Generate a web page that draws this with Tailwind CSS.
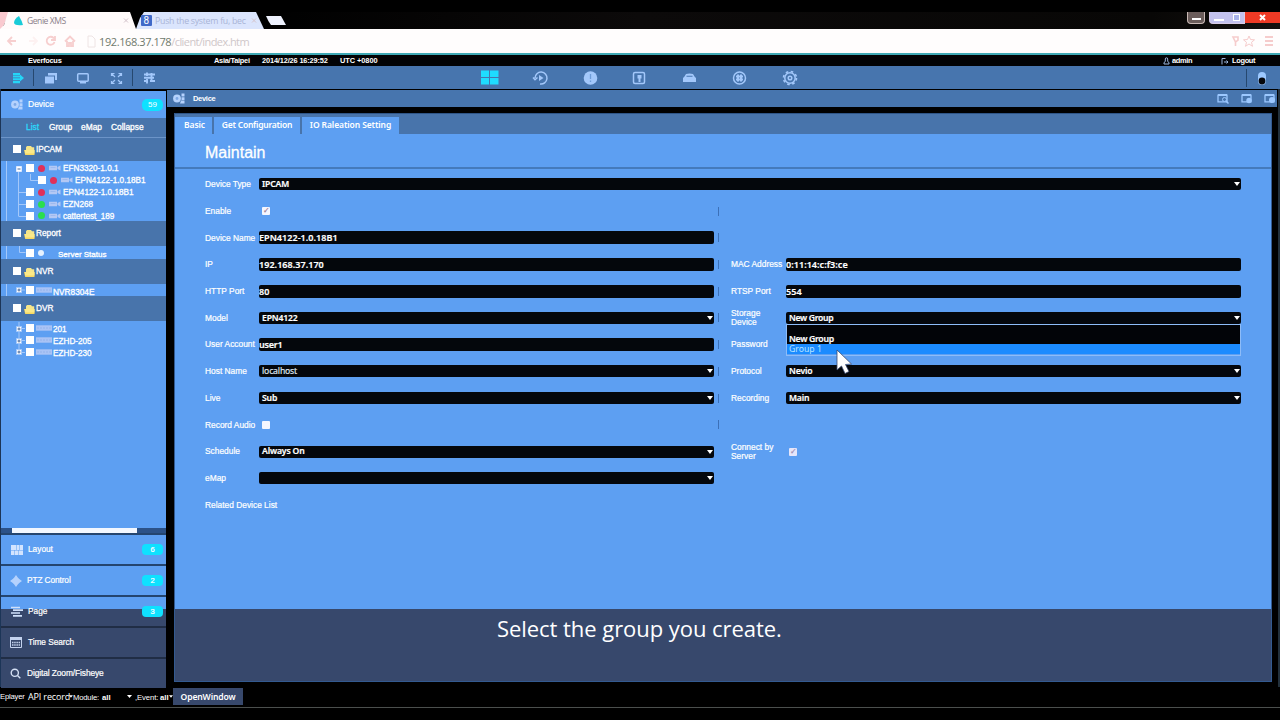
<!DOCTYPE html>
<html lang="en">
<head>
<meta charset="utf-8">
<title>Genie XMS</title>
<script src="https://cdn.jsdelivr.net/npm/@tailwindcss/browser@4"></script>
</head>
<body class="bg-black">
<svg class="hidden">
  <symbol id="cam" viewBox="0 0 12 11"><circle cx="4" cy="5.5" r="3.9"/><circle cx="4" cy="5.5" r="1.4" fill="#7fa9e6"/><path d="M8.5 0.5h3v3h-3zM8.5 4.3h3v2.6h-3zM8 7.6h3.5v3H7z"/></symbol>
  <symbol id="folder" viewBox="0 0 11 9"><path d="M2 1.2 3 0h4l1 1.2h2.2V4H2z" fill="#f5e58a"/><path d="M0 4h8.5l2 0V9H1.2z" fill="#f8d860"/><path d="M1 4h9.5v3.5H1z" fill="#fbe988"/></symbol>
  <symbol id="bullet" viewBox="0 0 12 6"><path d="M0 .8h8v4.4H0zM8.5 2l3-1.5v5l-3-1.5z" fill="#b3c8f4"/><path d="M1.5 2.5h5" stroke="#9db9ee"/></symbol>
  <symbol id="box" viewBox="0 0 16 6"><path d="M0 .3h16v5.4H0z" fill="#a9c3f5"/><path d="M1 3h14" stroke="#93b3ec" stroke-dasharray="2 1"/></symbol>
  <symbol id="win" viewBox="0 0 12 10"><path d="M1 1.2h9v6.6H1z" fill="none" stroke="#9cc8ff" stroke-width="1.3"/><path d="M1 1h9" stroke="#9cc8ff" stroke-width="2"/></symbol>
</svg>
<div class="relative flex h-[720px] w-[1280px] flex-col overflow-hidden bg-black pt-[12px] font-['Liberation_Sans'] text-[9px] leading-none whitespace-nowrap text-white">

  <!-- Browser tabs -->
  <div class="flex h-[17px] shrink-0 items-stretch bg-[linear-gradient(90deg,#000_20%,#0c0a0a_50%,#080706_90%,#14110f)]">
    <svg class="h-[17px] w-[300px]" viewBox="0 0 300 17">
      <path d="M0 0h10L2 17H0z" fill="#f9c9cf"/><path d="M8 0h122l6 17H0L4 13z" fill="#fffafa"/>
      <path d="M144 0h112l8 17H136l4-11z" fill="#dbe5fd"/><path d="M266 4h15l5 9h-15q-3-4-5-9z" fill="#eef1fd"/>
      <path d="M19 4q3 5 4 9-8 1-9-2 0-4 5-7z" fill="#19cbd8"/>
      <rect x="141" y="3" width="11" height="11" rx="1" fill="#4069c8"/>
      <text x="143.500" y="12" font-size="10" font-family="Roboto" fill="#fff">8</text>
      <path d="m124 6.500 4 4m0-4-4 4M252 6.500l4 4m0-4-4 4" stroke="#d4c4cc"/>
      <text x="27" y="12" font-size="8.600" font-family="Open Sans" letter-spacing="-.48" fill="#8b7f89">Genie XMS</text>
      <text x="155" y="12" font-size="8.800" font-family="Open Sans" letter-spacing="-.28" fill="#a9b4d6">Push the system fu, bec</text>
    </svg>
    <div class="ml-auto flex items-start">
      <div class="mr-[4px] flex h-[12px] w-[18px] items-end justify-center rounded-b-[4px] border border-t-0 border-[#c9b9b5] bg-[#6b5d5b] pb-[3px]"><i class="h-[2px] w-[9px] bg-white"></i></div>
      <div class="flex h-[12px] w-[36px] items-center justify-around rounded-bl-[4px] border border-t-0 border-[#d8cbe6] bg-[#c3c2ee]"><i class="mt-[4px] h-[2px] w-[10px] bg-white"></i><i class="size-[7px] border border-white bg-[#a9b3ec]"></i></div>
      <div class="flex h-[11px] w-[35px] items-center justify-center bg-[#ee3a25]"><svg class="size-[7px]" viewBox="0 0 7 7"><path d="m1 1 5 5m0-5-5 5" stroke="#fff" stroke-width="2"/></svg></div>
    </div>
  </div>

  <!-- Address bar -->
  <div class="flex h-[24px] shrink-0 items-center bg-[#fffdfd] pl-[6px]">
    <svg class="h-[16px] w-[91px]" viewBox="0 0 91 16" fill="none" stroke="#f7cfcf" stroke-width="1.8">
      <path d="M10 8H2m4-4L2 8l4 4"/><path d="M23 8h7m-3-4 4 4-4 4" stroke="#fdf1f1"/><path d="M48 5.500A4 4 0 1 0 48.500 9M49 3v4h-4"/><path d="m59 8.500 5-5 5 5M61 8v5h2v-3h2v3h2V8" /><path d="M82 3h4l3 3v8h-7z" stroke="#eee4e4" stroke-width="1"/>
    </svg>
    <span class="font-['Open_Sans'] text-[11px]"><span class="ml-[2px] tracking-[-0.400px] text-[#6f7a6c]">192.168.37.178</span><span class="tracking-[-0.580px] text-[#cfc7c9]">/client/index.htm</span></span>
    <svg class="ml-auto h-[14px] w-[52px]" viewBox="0 0 52 14" fill="none" stroke="#f6cccc"><path d="M5 3h5v3L7.500 8zM7.500 8v4" stroke-width="1.600"/><path d="m21 2 1.500 3.500 4 .3-3 2.500 1 4L21 10l-3.500 2.300 1-4-3-2.500 4-.3z"/><path d="M37 3h8M37 7h8M37 11h8" stroke-width="2"/></svg>
  </div>
  <div class="h-[2px] shrink-0 bg-[#3fa9b5]"></div>

  <!-- Status header -->
  <div class="flex h-[11px] shrink-0 items-center bg-[#020305] text-[7.400px] font-bold">
    <span class="ml-[28px] w-[186px] tracking-[-0.250px]">Everfocus</span>
    <span class="w-[48px] tracking-[-0.25px]">Asia/Taipei</span>
    <span class="w-[78px] tracking-[-0.15px]">2014/12/26 16:29:52</span>
    <span class="tracking-[-0.05px]">UTC +0800</span>
    <svg class="ml-auto h-[8px] w-[7px]" viewBox="0 0 7 8" fill="none" stroke="#9bb6dd"><path d="M1 7V5.500l1.300-1V2a1.200 1.200 0 0 1 2.400 0v2.500L6 5.500V7z"/></svg>
    <span class="ml-[2px] w-[49px] tracking-[-0.3px]">admin</span>
    <svg class="mr-[3px] h-[8px] w-[8px]" viewBox="0 0 8 8" fill="none" stroke="#9bb6dd"><path d="M4.500 1.500H1v6M3 5h4M5.500 3.500 7 5 5.500 6.500"/></svg>
    <span class="w-[48px] tracking-[-0.3px]">Logout</span>
  </div>

  <!-- Toolbar -->
  <div class="flex h-[23px] shrink-0 items-center bg-[#4775ae]">
    <svg class="h-[23px] w-[170px]" viewBox="0 0 170 23" fill="#a3c8fb">
      <path d="M33.500 3v17M132.500 3v17" stroke="#26486f"/>
      <path d="M13 7h7v2h-7zM13 9.600h8v2h-8zM13 12.200h8v2h-8zM13 15h7v2.300h-7zM20 8.500l4 3.500-4 3.500z" fill="#25d5f7"/>
      <path d="M48 7h9v7h-2V9.500h-7zM45 10.500h9v7h-9z"/>
      <rect x="77.700" y="7.700" width="10.500" height="7.500" rx="1" fill="none" stroke="#a3c8fb" stroke-width="1.500"/><path d="M80 16h6v1.500h-6z"/>
      <path d="M111.500 10V7.500h3m4 0h3V10m0 5v2.500h-3m-4 0h-3V15m.5-7 3 3m6-3-3 3m3 6-3-3m-6 3 3-3" fill="none" stroke="#a3c8fb" stroke-width="1.200"/>
      <path d="M144 8.500h11M144 11.800h10M144 15h4M150 15h5M147 6.500v3.500M151.500 7v7M147 13v4.500" fill="none" stroke="#a3c8fb" stroke-width="1.900"/>
    </svg>
    <svg class="ml-[310px] h-[23px] w-[330px]" viewBox="480 0 330 23" fill="none" stroke="#a3c8fb" stroke-width="1.500">
      <path d="M481 4.500h8v6.500h-8zM490 4.500h8.500v6.500H490zM481 12h8v6.500h-8zM490 12h8.500v6.500H490z" fill="#1edcff" stroke="none"/>
      <path d="M535 12a6 6 0 1 1 5 6M533 11.500l2 2.200 2.500-2.200"/><path d="M539 9v6l4.500-3z" fill="#a3c8fb" stroke="none"/>
      <circle cx="590.500" cy="12" r="6.800" fill="#a3c8fb" stroke="none"/><path d="M590.500 8v5M590.500 14.500v1.500" stroke="#6d9cd8" stroke-width="1.300"/>
      <rect x="633.500" y="6.500" width="11" height="11" rx="1.500"/><path d="M637.500 9h4v3.500h-1V16h-2v-3.500h-1z" fill="#a3c8fb" stroke="none"/>
      <path d="M683 12l1.500-1.500L686 8q3.500-1 7 0l1.500 2.500L696 12v4h-13z" fill="#a3c8fb" stroke="none"/><path d="M686.500 10.300h6" stroke="#5683bd" stroke-width="1.200"/>
      <circle cx="739.500" cy="12" r="6"/><path d="M736 10.500h7M736 13.500h7M738 8.500v7M741 8.500v7" stroke-width="2"/>
      <circle cx="790" cy="12" r="5.200"/><circle cx="790" cy="12" r="1.800"/><circle cx="790" cy="12" r="6.500" stroke-width="1.600" stroke-dasharray="2.550 2.550"/>
    </svg>
    <svg class="ml-auto h-[23px] w-[36px]" viewBox="0 0 36 23"><path d="M2.500 3v18" stroke="#26486f"/><rect x="14" y="6" width="8" height="13" rx="4" fill="#9cc8ff"/><circle cx="18" cy="15" r="3.400" fill="#05070c"/></svg>
  </div>

  <div class="flex h-[598px] shrink-0">
    <!-- Sidebar -->
    <aside class="flex w-[166px] shrink-0 flex-col border-l border-[#1c3557] pt-[2px]">
      <div class="flex h-[27px] shrink-0 items-center bg-[#5d9ff2] pr-[3px] pl-[10px]"><svg class="h-[11px] w-[12px] fill-[#b5d2fd]"><use href="#cam"/></svg><span class="ml-[5px] text-[8.500px] [-webkit-text-stroke:0.2px]">Device</span><b class="ml-auto w-[21px] rounded-[5px] bg-[#0fe1ff] py-[2px] text-center text-[8px] font-normal">59</b></div>
      <nav class="flex h-[20px] shrink-0 items-center border-b border-[#6c94c8] bg-[#4874ab] pl-[25px] text-[8.400px] [-webkit-text-stroke:0.3px]"><span class="w-[23px] text-[#2bd8fb]">List</span><span class="w-[32px]">Group</span><span class="w-[30px]">eMap</span><span>Collapse</span></nav>

      <div class="flex h-[23px] shrink-0 items-center bg-[#4874ab] pl-[12px]"><i class="mb-[1px] size-[8px] bg-white"></i><svg class="mt-[1px] ml-[3px] h-[9px] w-[11px]"><use href="#folder"/></svg><span class="ml-[1px] text-[8.300px] tracking-[-0.1px] [-webkit-text-stroke:0.3px]">IPCAM</span></div>
      <div class="relative flex h-[60px] shrink-0 flex-col bg-[#5d9ff2] pt-[1px] text-[8.200px] [-webkit-text-stroke:0.3px]">
        <svg class="absolute top-0 left-0 h-[60px] w-[40px]" viewBox="0 0 40 60" fill="none" stroke="#a4c8fa"><path d="M5.500 0v60M17.500 9v46M17.500 31.500h8M17.500 43.500h8M17.500 55.500h8M29.500 13v6.500h8"/><path d="M15.500 5.500h5v5h-5z" fill="#fff" stroke="#dce9ff"/><path d="M16.500 8h3" stroke="#47689c"/></svg>
        <div class="relative flex h-[12px] items-center pl-[25px]"><i class="mb-[1px] size-[8px] bg-white"></i><i class="ml-[4px] size-[7px] rounded-full bg-[#e0305a]"></i><svg class="ml-[4px] h-[6px] w-[12px]"><use href="#bullet"/></svg><span class="mt-[3px] ml-[2px]">EFN3320-1.0.1</span></div>
        <div class="relative flex h-[12px] items-center pl-[37px]"><i class="mb-[1px] size-[8px] bg-white"></i><i class="ml-[4px] size-[7px] rounded-full bg-[#e0305a]"></i><svg class="ml-[4px] h-[6px] w-[12px]"><use href="#bullet"/></svg><span class="mt-[3px] ml-[2px]">EPN4122-1.0.18B1</span></div>
        <div class="relative flex h-[12px] items-center pl-[25px]"><i class="mb-[1px] size-[8px] bg-white"></i><i class="ml-[4px] size-[7px] rounded-full bg-[#e0305a]"></i><svg class="ml-[4px] h-[6px] w-[12px]"><use href="#bullet"/></svg><span class="mt-[3px] ml-[2px]">EPN4122-1.0.18B1</span></div>
        <div class="relative flex h-[12px] items-center pl-[25px]"><i class="mb-[1px] size-[8px] bg-white"></i><i class="ml-[4px] size-[7px] rounded-full bg-[#2ade4e]"></i><svg class="ml-[4px] h-[6px] w-[12px]"><use href="#bullet"/></svg><span class="mt-[3px] ml-[2px]">EZN268</span></div>
        <div class="relative flex h-[11px] items-center pl-[25px]"><i class="size-[8px] bg-white"></i><i class="ml-[4px] size-[7px] rounded-full bg-[#2ade4e]"></i><svg class="ml-[4px] h-[6px] w-[12px]"><use href="#bullet"/></svg><span class="mt-[3px] ml-[2px] tracking-[-0.05px]">cattertest_189</span></div>
      </div>
      <div class="flex h-[25px] shrink-0 items-center bg-[#4874ab] pl-[12px]"><i class="mb-[1px] size-[8px] bg-white"></i><svg class="mt-[1px] ml-[3px] h-[9px] w-[11px]"><use href="#folder"/></svg><span class="ml-[1px] text-[8.300px] [-webkit-text-stroke:0.3px]">Report</span></div>
      <div class="flex h-[13px] shrink-0 items-center bg-[#5d9ff2] text-[8px] [-webkit-text-stroke:0.3px]"><svg class="h-[13px] w-[25px]" viewBox="0 0 25 13" fill="none" stroke="#a4c8fa"><path d="M5.500 0v13M18.500 0v6.500h6"/></svg><i class="size-[8px] bg-white"></i><i class="ml-[4px] size-[6px] rounded-full bg-[#e6f2ff]"></i><span class="mt-[4px] ml-[14px]">Server Status</span></div>
      <div class="flex h-[25px] shrink-0 items-center bg-[#4874ab] pl-[12px]"><i class="mb-[1px] size-[8px] bg-white"></i><svg class="mt-[1px] ml-[3px] h-[9px] w-[11px]"><use href="#folder"/></svg><span class="ml-[1px] text-[8.300px] [-webkit-text-stroke:0.3px]">NVR</span></div>
      <div class="flex h-[12px] shrink-0 items-center bg-[#5d9ff2] text-[8.300px] [-webkit-text-stroke:0.3px]"><svg class="h-[12px] w-[25px]" viewBox="0 0 25 12" fill="none" stroke="#a4c8fa"><path d="M5.500 0v12M18 6h6"/><path d="M15.500 3.500h5v5h-5z" fill="#fff"/><path d="M16.500 6h3M18 4.500v3" stroke="#47689c"/></svg><i class="size-[8px] bg-white"></i><svg class="ml-[2px] h-[6px] w-[16px]"><use href="#box"/></svg><span class="mt-[4px] ml-[1px]">NVR8304E</span></div>
      <div class="flex h-[25px] shrink-0 items-center bg-[#4874ab] pl-[12px]"><i class="mb-[1px] size-[8px] bg-white"></i><svg class="mt-[1px] ml-[3px] h-[9px] w-[11px]"><use href="#folder"/></svg><span class="ml-[1px] text-[8.300px] [-webkit-text-stroke:0.3px]">DVR</span></div>
      <div class="flex h-[207px] shrink-0 flex-col bg-[#5d9ff2] pt-[1px] text-[8.200px] [-webkit-text-stroke:0.3px]">
        <div class="flex h-[12px] items-center"><svg class="h-[12px] w-[25px]" viewBox="0 0 25 12" fill="none" stroke="#a4c8fa"><path d="M18 0v12M18 6.500h6"/><path d="M15.500 4.500h5v5h-5z" fill="#fff"/><path d="M16.500 7h3M18 5.500v3" stroke="#47689c"/></svg><i class="mb-[1px] size-[8px] bg-white"></i><svg class="ml-[2px] h-[6px] w-[16px]"><use href="#box"/></svg><span class="mt-[4px] ml-[1px]">201</span></div>
        <div class="flex h-[12px] items-center"><svg class="h-[12px] w-[25px]" viewBox="0 0 25 12" fill="none" stroke="#a4c8fa"><path d="M18 0v12M18 6.500h6"/><path d="M15.500 4.500h5v5h-5z" fill="#fff"/><path d="M16.500 7h3M18 5.500v3" stroke="#47689c"/></svg><i class="mb-[1px] size-[8px] bg-white"></i><svg class="ml-[2px] h-[6px] w-[16px]"><use href="#box"/></svg><span class="mt-[4px] ml-[1px]">EZHD-205</span></div>
        <div class="flex h-[12px] items-center"><svg class="h-[12px] w-[25px]" viewBox="0 0 25 12" fill="none" stroke="#a4c8fa"><path d="M18 0v6M18 6.500h6"/><path d="M15.500 3.500h5v5h-5z" fill="#fff"/><path d="M16.500 6h3M18 4.500v3" stroke="#47689c"/></svg><i class="mb-[1px] size-[8px] bg-white"></i><svg class="ml-[2px] h-[6px] w-[16px]"><use href="#box"/></svg><span class="mt-[4px] ml-[1px]">EZHD-230</span></div>
      </div>
      <div class="flex h-[5px] shrink-0 bg-[#2c5288] pl-[11px]"><i class="w-[125px] bg-[#f2f7ff]"></i></div>
      <div class="flex flex-col gap-[2px] bg-[#24456f] pt-[2px] text-[8.300px] [-webkit-text-stroke:0.2px]">
        <div class="flex h-[29px] items-center bg-[#5d9ff2] pr-[3px] pl-[10px]"><svg class="h-[10px] w-[12px] fill-[#d3e4ff]" viewBox="0 0 12 10"><path d="M0 0h5.500v5H0zM6 0h2.500v5H6zM9 0h3v5H9zM0 5.500h3.500V10H0zM4 5.500h3.500V10H4zM8 5.500h4V10H8z"/></svg><span class="ml-[5px]">Layout</span><b class="ml-auto w-[21px] rounded-[4px] bg-[#0fe1ff] py-[2px] text-center text-[7.500px] font-normal">6</b></div>
        <div class="flex h-[29px] items-center bg-[#5d9ff2] pr-[3px] pl-[9px]"><svg class="h-[12px] w-[12px] fill-[#b5d2fd]" viewBox="0 0 12 12"><path d="m6 0 2.500 3.500L12 6 8.500 8.500 6 12 3.500 8.500 0 6l3.500-2.500z"/><circle cx="6" cy="6" r="3.300"/></svg><span class="ml-[5px] tracking-[-0.1px]">PTZ Control</span><b class="ml-auto w-[21px] rounded-[4px] bg-[#0fe1ff] py-[2px] text-center text-[7.500px] font-normal">2</b></div>
        <div class="flex h-[29px] items-center bg-[linear-gradient(#5d9ff2_12px,#37486c_12px)] pr-[3px] pl-[10px]"><svg class="h-[11px] w-[12px]" viewBox="0 0 12 11"><path d="M0 1.500h9M2 4.200h10M0 7h9M2 9.800h9" stroke="#cfe0fa" stroke-width="1.700"/></svg><span class="ml-[5px]">Page</span><b class="ml-auto w-[21px] rounded-[4px] bg-[#0fe1ff] py-[2px] text-center text-[7.500px] font-normal">3</b></div>
      </div>
      <div class="flex flex-col gap-[2px] bg-[#202d45] pt-[2px] text-[8.300px] [-webkit-text-stroke:0.2px]">
        <div class="flex h-[29px] items-center bg-[#37486c] pl-[9px]"><svg class="h-[11px] w-[12px]" viewBox="0 0 12 11"><path d="M.5 1h11v9.500H.5z" fill="none" stroke="#c4d3ee"/><path d="M0 0h12v3H0z" fill="#c4d3ee"/><path d="M2 5.500h8M2 8h8" stroke="#c4d3ee" stroke-width="1.500" stroke-dasharray="1.500 .7"/></svg><span class="ml-[6px] tracking-[-0.05px]">Time Search</span></div>
        <div class="flex h-[29px] items-center bg-[#37486c] pl-[9px]"><svg class="h-[11px] w-[11px]" viewBox="0 0 11 11" fill="none" stroke="#d4e0f4" stroke-width="1.400"><circle cx="4.800" cy="4.800" r="3.600"/><path d="m7.500 7.500 2.800 2.800"/></svg><span class="ml-[6px] text-[8.400px] tracking-[-0.1px]">Digital Zoom/Fisheye</span></div>
      </div>
    </aside>

    <!-- Main window -->
    <main class="ml-[1px] flex w-[1110px] flex-col pt-[1px]">
      <header class="flex h-[17px] shrink-0 items-center bg-[#4775ae] pl-[6px]"><svg class="h-[11px] w-[12px] fill-[#b5d2fd]"><use href="#cam"/></svg><span class="mt-[1px] ml-[8px] text-[7.500px] font-bold tracking-[-0.3px]">Device</span>
        <div class="ml-auto flex gap-[12px] pr-[2px]">
          <svg class="h-[10px] w-[12px]" viewBox="0 0 12 10"><use href="#win"/><circle cx="7.500" cy="5.500" r="2" fill="#4775ae" stroke="#9cc8ff"/><path d="m9 7 2.500 2.500" stroke="#9cc8ff" stroke-width="1.500"/></svg>
          <svg class="h-[10px] w-[11px]" viewBox="0 0 11 10"><use href="#win" width="12" height="10"/><circle cx="8" cy="6.500" r="2.700" fill="#9cc8ff"/></svg>
          <svg class="h-[10px] w-[11px]" viewBox="0 0 11 10"><use href="#win" width="12" height="10"/><circle cx="8" cy="6" r="3" fill="#9cc8ff"/></svg>
        </div>
      </header>
      <section class="mt-[6px] ml-[7px] h-[569px] w-[1098px] border border-t-0 border-[#335a90] bg-[linear-gradient(#5d9ff2_496px,#37486c_496px)]">
        <div class="flex h-[21px] gap-[2px] border-t border-[#2f5587] bg-[#4874ab] pt-[3px] font-['Noto_Sans'] text-[8.500px] font-semibold">
          <span class="flex w-[37px] items-center justify-center bg-[#5d9ff2] pl-[2px] tracking-[-0.1px]">Basic</span>
          <span class="flex w-[86px] items-center justify-center bg-[#5d9ff2] tracking-[-0.220px]">Get Configuration</span>
          <span class="flex w-[97px] items-center justify-center bg-[#5d9ff2] tracking-[-0.100px]">IO Raleation Setting</span>
        </div>
        <h1 class="flex h-[35px] items-center border-b-2 border-[#447abc] pt-[5px] pl-[30px] text-[16px] [-webkit-text-stroke:0.3px]">Maintain</h1>

        <div class="relative grid auto-rows-[26.720px] grid-cols-[54px_455px_17px_55px_455px] items-center pt-[2px] pl-[30px] text-[8.400px] [-webkit-text-stroke:0.2px] [&_p]:flex [&_p]:h-[12px] [&_p]:items-center [&_p]:rounded-[2px] [&_p]:bg-[#04070c] [&_p]:font-['Noto_Sans'] [&_p]:text-[8.600px] [&_p]:font-semibold [&_p]:tracking-[-0.140px] [&_p.n]:h-[13px] [&_p.n]:text-[9px] [&_p.n]:tracking-[0.050px] [&_svg]:ml-auto [&_svg]:mr-[1px] [&_svg]:h-[4px] [&_svg]:w-[6px] [&_svg]:fill-white [&>i]:ml-[4px] [&>i]:h-[9px] [&>i]:w-px [&>i]:bg-[#3c70b8]">
          <span>Device Type</span><p class="col-span-4 pl-[3px]">IPCAM<svg viewBox="0 0 6 4"><path d="M0 0h6L3 4z"/></svg></p>

          <span>Enable</span><div class="ml-[3px] flex size-[8px] items-center justify-center rounded-[1px] bg-[#f4f6ff] text-[8px] text-[#9d7a90]">✓</div><i></i><span></span><span></span>

          <span>Device Name</span><p class="n">EPN4122-1.0.18B1</p><i></i><span></span><span></span>

          <span>IP</span><p class="n">192.168.37.170</p><i></i><span>MAC Address</span><p class="n">0:11:14:c:f3:ce</p>

          <span>HTTP Port</span><p class="n">80</p><i></i><span>RTSP Port</span><p class="n">554</p>

          <span>Model</span><p class="pl-[3px]">EPN4122<svg viewBox="0 0 6 4"><path d="M0 0h6L3 4z"/></svg></p><i></i><span class="leading-[9px]">Storage<br>Device</span><p class="pl-[3px]"><span class="tracking-[-0.3px]">New Group</span><svg viewBox="0 0 6 4"><path d="M0 0h6L3 4z"/></svg></p>

          <span>User Account</span><p class="n"><span class="tracking-[-0.2px]">user1</span></p><i></i><span>Password</span><span></span>

          <span>Host Name</span><p class="pl-[3px]"><span class="font-normal text-[#dfe4ee]">localhost</span><svg viewBox="0 0 6 4"><path d="M0 0h6L3 4z"/></svg></p><i></i><span>Protocol</span><p class="pl-[3px]">Nevio<svg viewBox="0 0 6 4"><path d="M0 0h6L3 4z"/></svg></p>

          <span>Live</span><p class="pl-[3px]">Sub<svg viewBox="0 0 6 4"><path d="M0 0h6L3 4z"/></svg></p><i></i><span>Recording</span><p class="pl-[3px]">Main<svg viewBox="0 0 6 4"><path d="M0 0h6L3 4z"/></svg></p>

          <span>Record Audio</span><div class="ml-[3px] size-[8px] rounded-[1px] bg-[#f4f6ff]"></div><i></i><span></span><span></span>

          <span>Schedule</span><p class="pl-[3px]">Always On<svg viewBox="0 0 6 4"><path d="M0 0h6L3 4z"/></svg></p><b></b><span class="leading-[9px]">Connect by<br>Server</span><div class="ml-[3px] flex size-[8px] items-center justify-center rounded-[1px] bg-[#e6e6fa] text-[8px] text-[#9d8ab0]">✓</div>

          <span>eMap</span><p><svg viewBox="0 0 6 4"><path d="M0 0h6L3 4z"/></svg></p><b></b><b></b><b></b>

          <span>Related Device List</span>

          <!-- Open storage list -->
          <div class="absolute top-[155px] left-[611px] flex h-[32px] w-[455px] flex-col border border-[#8dbcf8] bg-[#020408] font-['Noto_Sans'] text-[8.700px] leading-[9px]">
            <span class="flex h-[19px] items-end pl-[2px] font-semibold tracking-[-0.300px]">New Group</span>
            <span class="flex h-[10px] items-end bg-[#1b8bff] pl-[2px] text-[#b8e4ff] [-webkit-text-stroke:0]">Group 1</span>
            <span class="h-px bg-[#5d9ff2]"></span>
          </div>
        </div>
      </section>
    </main>
    <div class="ml-auto w-[2px] bg-[#22303c]"></div>
  </div>

  <!-- Footer -->
  <footer class="flex h-[20px] shrink-0 items-start text-[7.700px]">
    <div class="flex h-[19px] w-[173px] shrink-0 items-center overflow-hidden"><span class="w-[28px] tracking-[-0.2px]">Eplayer</span><span class="flex w-[45px] items-center font-['Open_Sans'] text-[9px] tracking-[-0.15px]">API record<svg class="-ml-px h-[3px] w-[4px] fill-white" viewBox="0 0 5 3"><path d="M0 0h5L2.500 3z"/></svg></span><span class="mt-[3px] w-[29px] tracking-[-0.2px]">Module:</span><b class="mt-[2px] w-[25px]">all</b><svg class="h-[3px] w-[5px] fill-white" viewBox="0 0 5 3"><path d="M0 0h5L2.500 3z"/></svg><span class="mt-[2px] ml-[3px] w-[25px] tracking-[-0.1px]">,Event:</span><b class="mt-[2px]">all</b><svg class="h-[3px] w-[4px] fill-white" viewBox="0 0 5 3"><path d="M0 0h5L2.500 3z"/></svg></div>
    <div class="mt-[1px] flex h-[17px] w-[70px] items-center justify-center bg-[#37486c] pt-[1px] font-['Noto_Sans'] text-[8.600px] font-semibold tracking-[-0.150px]">OpenWindow</div>
  </footer>
  <div class="h-px shrink-0 bg-[#4b4f4d]"></div>

  <!-- Caption -->
  <div class="absolute top-[613px] left-[497px] font-['Open_Sans'] text-[22px] leading-[30px] tracking-[-0.050px]">Select the group you create.</div>

  <!-- Pointer -->
  <svg class="absolute top-[348px] left-[836px] h-[28px] w-[18px]" viewBox="0 0 18 28"><path d="M1 2v20l4.500-4 3.500 7.500 4-2-3.500-7 6-.5z" fill="#fff" stroke="#3a4a70" stroke-width=".8"/></svg>
</div>
</body>
</html>
